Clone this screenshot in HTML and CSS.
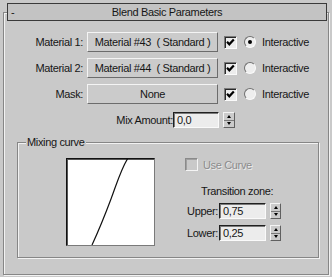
FILE: index.html
```html
<!DOCTYPE html>
<html>
<head>
<meta charset="utf-8">
<link rel="stylesheet" href="styles.css">
</head>
<body>
<div class="frame">
  <div class="titlebar"><span class="collapse">-</span><span class="title">Blend Basic Parameters</span><span></span></div>
  <div class="mats">
    <div class="mat-row">
      <span class="label">Material 1:</span>
      <button class="btn">Material #43 &nbsp;( Standard )</button>
      <span class="check"><svg width="11" height="11" viewBox="0 0 11 11"><polyline points="2,4.8 4.3,7.3 8.8,2.4" fill="none" stroke="#000" stroke-width="2.2"/></svg></span>
      <span class="radio on"></span>
      <span class="opt">Interactive</span>
    </div>
    <div class="mat-row">
      <span class="label">Material 2:</span>
      <button class="btn">Material #44 &nbsp;( Standard )</button>
      <span class="check"><svg width="11" height="11" viewBox="0 0 11 11"><polyline points="2,4.8 4.3,7.3 8.8,2.4" fill="none" stroke="#000" stroke-width="2.2"/></svg></span>
      <span class="radio"></span>
      <span class="opt">Interactive</span>
    </div>
    <div class="mat-row">
      <span class="label">Mask:</span>
      <button class="btn">None</button>
      <span class="check"><svg width="11" height="11" viewBox="0 0 11 11"><polyline points="2,4.8 4.3,7.3 8.8,2.4" fill="none" stroke="#000" stroke-width="2.2"/></svg></span>
      <span class="radio"></span>
      <span class="opt">Interactive</span>
    </div>
  </div>
  <div class="mix-row">
    <span class="mix-label">Mix Amount:</span>
    <span class="field w46">0,0</span>
    <span class="spinner"><span class="up"></span><span class="down"></span></span>
  </div>
  <div class="group">
    <div class="legend"><span>Mixing curve</span></div>
    <div class="group-body">
      <div class="curve">
        <svg width="87" height="86" viewBox="0 0 87 86"><path d="M25 86 C 31 73, 38 56, 44 40 S 54 10, 61 -1" fill="none" stroke="#111" stroke-width="1.2"/></svg>
      </div>
      <div class="side">
        <div class="usecurve"><span class="check disabled"></span><span class="uc-text">Use Curve</span></div>
        <div class="tz">Transition zone:</div>
        <div class="spin-row">
          <span class="lbl">Upper:</span>
          <span class="field w47">0,75</span>
          <span class="spinner small"><span class="up"></span><span class="down"></span></span>
        </div>
        <div class="spin-row lower">
          <span class="lbl">Lower:</span>
          <span class="field w47">0,25</span>
          <span class="spinner small"><span class="up"></span><span class="down"></span></span>
        </div>
      </div>
    </div>
  </div>
</div>
</body>
</html>
```
FILE: styles.css
```css
html, body {
  margin: 0;
  padding: 0;
}
body {
  background: #c9c9c9;
  font: 11px "Liberation Sans", Arial, sans-serif;
  letter-spacing: -0.35px;
  color: #161616;
  width: 332px;
  height: 277px;
  overflow: hidden;
  padding-top: 12px;
  box-sizing: border-box;
}
.frame {
  margin: 0 3px 0 3px;
  height: 263px;
  box-sizing: border-box;
  border: 1px solid #868686;
  box-shadow: inset 1px 1px 0 #f2f2f2, 1px 1px 0 #f2f2f2;
}
.titlebar {
  margin: -10px 1px 0 3px;
  height: 18px;
  box-sizing: border-box;
  border: 1px solid #3a3a3a;
  background: #c3c3c3;
  display: grid;
  grid-template-columns: 1fr auto 1fr;
  align-items: center;
  line-height: 16px;
}
.collapse {
  padding-left: 3px;
}
.mats {
  margin-top: 11px;
  display: flex;
  flex-direction: column;
  gap: 6px;
}
.mat-row {
  display: flex;
  align-items: center;
  height: 20px;
}
.label {
  width: 83px;
  padding-right: 4px;
  box-sizing: border-box;
  text-align: right;
}
.btn {
  width: 131px;
  height: 20px;
  box-sizing: border-box;
  font: inherit;
  letter-spacing: inherit;
  color: inherit;
  background: #cbcbcb;
  border: 1px solid;
  border-color: #f4f4f4 #6c6c6c #6c6c6c #f4f4f4;
  padding: 0;
  margin: 0;
  text-align: center;
  white-space: nowrap;
}
.check {
  width: 13px;
  height: 13px;
  box-sizing: border-box;
  margin-left: 6px;
  border: 1px solid;
  border-color: #7a7a7a #fafafa #fafafa #7a7a7a;
  box-shadow: inset 1px 1px 0 #2a2a2a;
  background: #ececec;
  display: flex;
}
.check svg {
  display: block;
}
.radio {
  width: 12px;
  height: 12px;
  margin-left: 7px;
  border-radius: 50%;
  box-sizing: border-box;
  border: 1px solid;
  border-color: #707070 #fafafa #fafafa #707070;
  background: #eeeeee;
  display: flex;
  align-items: center;
  justify-content: center;
}
.radio.on::after {
  content: "";
  width: 4px;
  height: 4px;
  border-radius: 50%;
  background: #000;
}
.opt {
  margin-left: 6px;
}
.mix-row {
  display: flex;
  align-items: center;
  margin-top: 8px;
  height: 16px;
}
.mix-label {
  width: 169px;
  text-align: right;
}
.field {
  height: 16px;
  box-sizing: border-box;
  border: 1px solid;
  border-color: #202020 #fafafa #fafafa #202020;
  box-shadow: inset 1px 1px 0 #7a7a7a;
  background: #ececec;
  padding-left: 3px;
  line-height: 14px;
}
.w46 { width: 46px; }
.w47 { width: 47px; }
.spinner {
  width: 12px;
  height: 16px;
  margin-left: 4px;
  display: flex;
  flex-direction: column;
  box-sizing: border-box;
  border: 1px solid;
  border-color: #f4f4f4 #606060 #606060 #f4f4f4;
  background: #cbcbcb;
}
.spinner.small {
  width: 11px;
}
.spinner span {
  flex: 1;
  display: flex;
  align-items: center;
  justify-content: center;
}
.spinner .up {
  border-bottom: 1px solid #7a7a7a;
}
.spinner .up::after {
  content: "";
  border-left: 2.5px solid transparent;
  border-right: 2.5px solid transparent;
  border-bottom: 3px solid #000;
}
.spinner .down::after {
  content: "";
  border-left: 2.5px solid transparent;
  border-right: 2.5px solid transparent;
  border-top: 3px solid #000;
}
.group {
  margin: 14px 9px 0 13px;
  height: 116px;
  box-sizing: border-box;
  border: 1px solid #868686;
  box-shadow: inset 1px 1px 0 #f2f2f2, 1px 1px 0 #f2f2f2;
}
.legend {
  height: 14px;
  margin: -8px 0 -6px 8px;
  line-height: 14px;
  display: flex;
}
.legend span {
  background: #c9c9c9;
  padding: 0 1px;
}
.group-body {
  display: flex;
  padding-top: 15px;
}
.curve {
  margin-left: 48px;
  width: 89px;
  height: 88px;
  box-sizing: border-box;
  border: 1px solid;
  border-color: #111 #7a7a7a #7a7a7a #111;
  box-shadow: inset 1px 1px 0 #555;
  background: #fff;
  overflow: hidden;
}
.curve svg {
  display: block;
}
.side {
  margin-left: 30px;
  display: flex;
  flex-direction: column;
}
.usecurve {
  display: flex;
  align-items: center;
  height: 13px;
  color: #8c8c8c;
  text-shadow: 1px 1px 0 #ececec;
}
.check.disabled {
  margin-left: 0;
  background: #c9c9c9;
  border-color: #8a8a8a #f4f4f4 #f4f4f4 #8a8a8a;
  box-shadow: inset 1px 1px 0 #a0a0a0;
}
.uc-text {
  margin-left: 5px;
}
.tz {
  margin-top: 13px;
  height: 14px;
  line-height: 14px;
  padding-left: 16px;
}
.spin-row {
  display: flex;
  align-items: center;
  height: 16px;
  margin-top: 5px;
}
.spin-row.lower {
  margin-top: 6px;
}
.lbl {
  width: 34px;
  padding-right: 1px;
  box-sizing: border-box;
  text-align: right;
}
```
